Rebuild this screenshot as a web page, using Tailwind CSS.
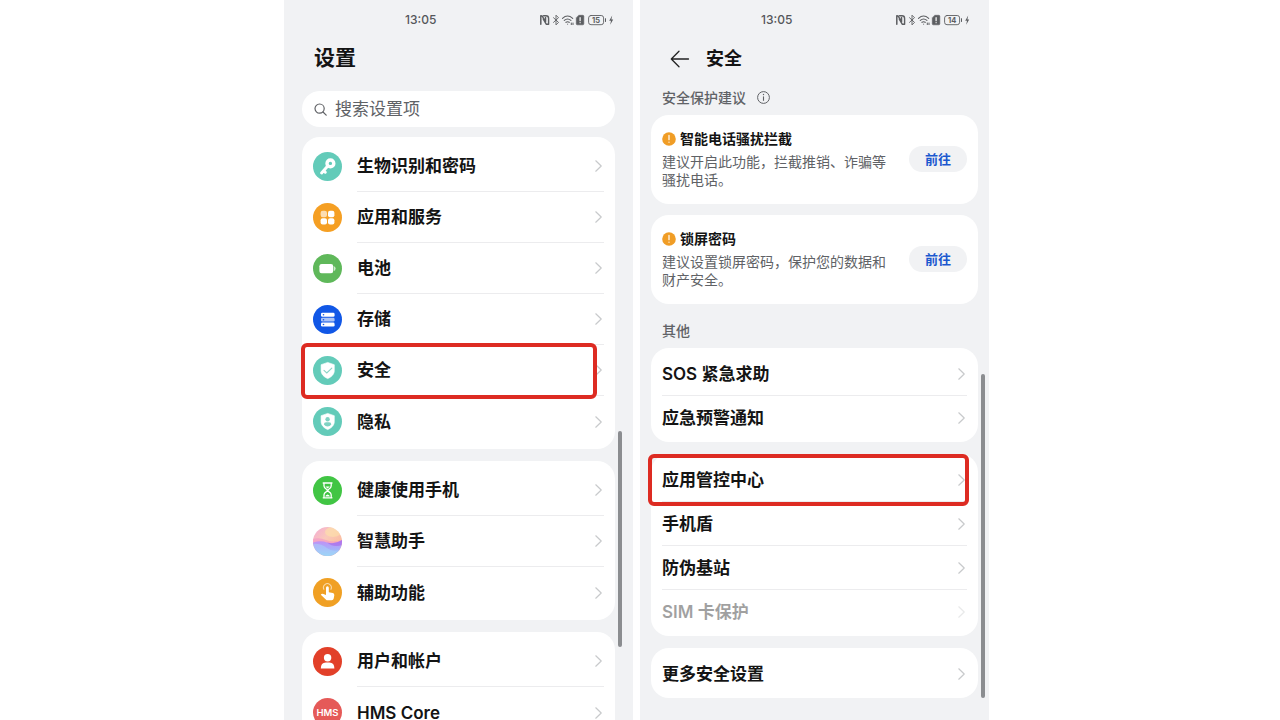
<!DOCTYPE html>
<html lang="zh-CN">
<head>
  <meta charset="UTF-8" />
  <meta name="viewport" content="width=device-width, initial-scale=1.0" />
  <title>设置</title>
  <script src="https://cdn.jsdelivr.net/npm/@tailwindcss/browser@4"></script>
</head>
<body class="bg-white font-['Inter','Noto_Sans_CJK_SC',sans-serif] text-[#141414]">

<main class="flex h-screen justify-center gap-[7px] overflow-hidden pr-[7px]">

  <!-- settings list -->
  <section class="relative w-[349px] overflow-hidden bg-[#f1f2f4]">
    <div class="status flex h-10 items-center justify-between pl-[121px] pr-[18px]" data-battery="15"></div>
    <h1 class="px-[30px] text-[21px] font-bold leading-[35px]">设置</h1>

    <form class="mx-[18px] mt-4 flex h-9 items-center gap-2 rounded-full bg-white pl-3" onsubmit="return false;">
      <label for="searchInput" aria-label="搜索设置项">
        <svg class="h-[13px] w-[13px] text-[#606266]" fill="none" stroke="currentColor" stroke-width="1.2" viewBox="0 0 13 13">
          <circle cx="5.6" cy="5.6" r="4.6" />
          <path stroke-linecap="round" d="M9 9l3.2 3.2" />
        </svg>
      </label>
      <input type="text" id="searchInput" placeholder="搜索设置项" class="min-w-0 flex-grow text-[17px] leading-6 placeholder:text-[#606266] focus:outline-none">
    </form>

    <div id="settingsList" class="mx-[18px] mt-[10px] flex flex-col gap-3"></div>

    <div class="absolute right-[11px] top-[431px] h-[216px] w-1 rounded-full bg-[#8b8d90]"></div>
  </section>

  <!-- security page -->
  <section class="relative w-[349px] overflow-hidden bg-[#f1f2f4]">
    <div class="status flex h-10 items-center justify-between pl-[121px] pr-[18px]" data-battery="14"></div>
    <header class="flex h-[37px] items-center gap-4 pl-[30px]">
      <button type="button" aria-label="返回">
        <svg class="h-5 w-5" fill="none" stroke="#222" stroke-width="1.3" stroke-linecap="round" stroke-linejoin="round" viewBox="0 0 20 20">
          <path d="M18.5 10H1.5M9 2.3L1.3 10L9 17.7" />
        </svg>
      </button>
      <h1 class="text-[18px] font-bold leading-6">安全</h1>
    </header>

    <div class="flex h-[38px] items-end gap-[11px] px-[22px] pb-[7px]">
      <h2 class="text-[14px] font-medium leading-5 text-[#606266]">安全保护建议</h2>
      <svg class="mb-1 h-[13px] w-[13px]" fill="none" stroke="#606266" viewBox="0 0 13 13">
        <circle cx="6.5" cy="6.5" r="5.9" stroke-width="1" />
        <path d="M6.5 5.4v4.4" stroke-width="1.1" />
        <circle cx="6.5" cy="3.5" r=".7" fill="#606266" stroke="none" />
      </svg>
    </div>

    <div id="adviceList" class="mx-[11px] flex flex-col gap-[11px]"></div>

    <div class="flex h-11 items-end px-[22px] pb-[7px]">
      <h2 class="text-[14px] font-medium leading-5 text-[#606266]">其他</h2>
    </div>

    <div id="securityList" class="mx-[11px] flex flex-col gap-3"></div>

    <div class="absolute right-1 top-[374px] h-[324px] w-1 rounded-full bg-[#8b8d90]"></div>
  </section>
</main>

<script>
  const icons = {
    key: `<circle cx="14.5" cy="14.5" r="14.5" fill="#63cbb9"/><circle cx="17.4" cy="11.4" r="3.4" fill="none" stroke="#fff" stroke-width="3.4"/><path d="M14.3 14.6L8.6 20.9M10.8 18.7l1.500 1.500" stroke="#fff" stroke-width="3" stroke-linecap="round"/>`,
    apps: `<circle cx="14.5" cy="14.5" r="14.5" fill="#f59f23"/><rect x="7.6" y="7.8" width="6.4" height="6.4" rx="2.2" fill="#fff" opacity=".65"/><g fill="#fff"><rect x="15" y="7.8" width="6.4" height="6.4" rx="2"/><rect x="7.6" y="15.2" width="6.4" height="6.4" rx="2"/><rect x="15" y="15.2" width="6.4" height="6.4" rx="2"/></g>`,
    battery: `<circle cx="14.5" cy="14.5" r="14.5" fill="#5fb85a"/><rect x="6.4" y="10" width="13.8" height="9.2" rx="2.2" fill="#fff"/><path d="M20.8 12.2q1.8.2 1.8 2.4t-1.8 2.4z" fill="#fff" opacity=".7"/>`,
    storage: `<circle cx="14.5" cy="14.5" r="14.5" fill="#1157e6"/><g fill="#fff"><rect x="8" y="7.8" width="13.6" height="3.9" rx="1.3"/><rect x="8" y="12.7" width="13.6" height="3.9" rx="1.3" opacity=".65"/><rect x="8" y="17.6" width="13.6" height="3.9" rx="1.3"/></g><g fill="#1157e6"><circle cx="10.5" cy="9.8" r=".8"/><circle cx="10.5" cy="14.7" r=".8"/><circle cx="10.5" cy="19.5" r=".8"/></g>`,
    shield: `<circle cx="14.5" cy="14.5" r="14.5" fill="#63cbb9"/><path d="M14.7 6.4l6.6 2.3v5.8c0 3.9-3.1 6.6-6.6 8.1-3.5-1.5-6.6-4.2-6.6-8.1V8.7z" fill="#fff" stroke="#fff" stroke-width=".6" stroke-linejoin="round"/><path d="M11 14.4l2.8 2.6 5-4.8" fill="none" stroke="#8bd5c7" stroke-width="1.1" stroke-linecap="round"/>`,
    privacy: `<circle cx="14.5" cy="14.5" r="14.5" fill="#63cbb9"/><path d="M14.7 6.4l6.6 2.3v5.8c0 3.9-3.1 6.6-6.6 8.1-3.5-1.5-6.6-4.2-6.6-8.1V8.7z" fill="#fff" stroke="#fff" stroke-width=".6" stroke-linejoin="round"/><g fill="#7fd2c3"><circle cx="14.6" cy="12.3" r="2.2"/><path d="M10.9 17.4q0-2.2 2.3-2.2h2.8q2.3 0 2.3 2.2-1.5 2-3.7 2t-3.7-2z"/></g>`,
    hourglass: `<circle cx="14.5" cy="14.5" r="14.5" fill="#41c544"/><g fill="none" stroke="#fff" stroke-width="1.3" stroke-linecap="round" stroke-linejoin="round"><path d="M10.2 7h8.8M10.2 21.8h8.8M11 7.3v2.7q0 1.8 2.4 3.2.9.6.9 1.2t-.9 1.2Q11 17 11 18.8v2.7M18.2 7.3v2.7q0 1.8-2.4 3.2-.9.6-.9 1.2t.9 1.2q2.4 1.4 2.4 3.2v2.7"/></g><path d="M12.4 10.4h4.4l-2.2 2.2zM12.3 20.6q.3-1.700 2.3-2.200 2 .5 2.300 2.200z" fill="#fff"/>`,
    assistant: `<defs><linearGradient id="sky" x1="0" y1="0" x2="1" y2="1"><stop offset="0" stop-color="#f3a9d6"/><stop offset=".4" stop-color="#fac9ba"/><stop offset="1" stop-color="#fbb38a"/></linearGradient><linearGradient id="wave" x1="0" y1="0" x2="0" y2="1"><stop offset="0" stop-color="#c58cf3"/><stop offset=".5" stop-color="#a9abfa"/><stop offset="1" stop-color="#8fd6f5"/></linearGradient><clipPath id="ball"><circle cx="14.5" cy="14.5" r="14.5"/></clipPath></defs><g clip-path="url(#ball)"><path fill="url(#sky)" d="M0 0h29v29H0z"/><ellipse cx="20" cy="5" rx="8" ry="5" fill="#fde3a8" opacity=".6"/><path d="M0 12q6-2 13 1t16 0v16H0z" fill="#f49bc6" opacity=".7"/><path d="M0 15.5q8-2.5 14 0t15-2.5v16H0z" fill="url(#wave)"/><path d="M14 15.5q8 2.5 15-2.5v5q-8 3-15-2.5z" fill="#a45be6" opacity=".5"/><path d="M0 17q7-1 14 4t15 1v7H0z" fill="#a9d4fa" opacity=".5"/></g>`,
    touch: `<circle cx="14.5" cy="14.5" r="14.5" fill="#f0a024"/><path d="M13 9.7q0-1.5 1.4-1.5t1.4 1.5v4.5l4 .9q1.7.5 1.5 2.2l-.6 3.3q-.3 1.7-2 1.7h-4q-1.1 0-1.900-.9l-5-4.7q.9-1.500 2.600-.7l2.600 1z" fill="#fff"/><path d="M11.1 11.6a3.900 3.900 0 1 1 6.600 0" fill="none" stroke="#fff" stroke-width="1.1" opacity=".6"/>`,
    user: `<circle cx="14.5" cy="14.5" r="14.5" fill="#e24029"/><circle cx="14.6" cy="10.7" r="3.7" fill="#fff"/><path d="M7.8 21.6q0-6 5-6h3.6q5 0 5 6z" fill="#fff"/>`,
    hms: `<circle cx="14.5" cy="14.5" r="14.5" fill="#e55a58"/><text x="14.5" y="18" text-anchor="middle" font-family="Inter, sans-serif" font-size="9.5" font-weight="600" fill="#fff">HMS</text>`,
  };

  const settings = [
    [
      { name: "生物识别和密码", icon: "key" },
      { name: "应用和服务", icon: "apps" },
      { name: "电池", icon: "battery" },
      { name: "存储", icon: "storage" },
      { name: "安全", icon: "shield", marked: true },
      { name: "隐私", icon: "privacy" },
    ],
    [
      { name: "健康使用手机", icon: "hourglass" },
      { name: "智慧助手", icon: "assistant" },
      { name: "辅助功能", icon: "touch" },
    ],
    [
      { name: "用户和帐户", icon: "user" },
      { name: "HMS Core", icon: "hms" },
    ],
  ];

  const advice = [
    { name: "智能电话骚扰拦截", text: "建议开启此功能，拦截推销、诈骗等骚扰电话。" },
    { name: "锁屏密码", text: "建议设置锁屏密码，保护您的数据和财产安全。" },
  ];

  const security = [
    [{ name: "SOS 紧急求助" }, { name: "应急预警通知" }],
    [{ name: "应用管控中心", marked: true }, { name: "手机盾" }, { name: "防伪基站" }, { name: "SIM 卡保护", disabled: true }],
    [{ name: "更多安全设置" }],
  ];

  const chevron = `<svg class="mr-[2px] h-3 w-[7px] shrink-0" fill="none" stroke="#c8cacc" stroke-width="1.2" stroke-linecap="round" stroke-linejoin="round" viewBox="0 0 7 12"><path d="M.8.8L6.2 6L.8 11.2"/></svg>`;

  // status bar: time on the left, NFC / bluetooth / wifi / sim / battery / charging on the right
  document.querySelectorAll(".status").forEach(bar => {
    bar.innerHTML = `
      <time class="text-[12px] font-medium leading-4 text-[#55575a]">13:05</time>
      <svg class="h-3 w-[76px]" viewBox="0 0 76 12" fill="none" stroke="#5c5e61" stroke-linecap="round" stroke-linejoin="round">
        <path d="M1.8 10.2V1.8l1.4.2 3.300 5.800V3.600" stroke-width="1.500"/>
        <path d="M4.600 1.800h2.400q2.600 0 2.600 2.600v5.800H7.200L4.200 5" stroke-width="1.400"/>
        <path d="M14.5 3.7l5 4.7-2.5 2.5V1.2l2.5 2.5-5 4.7" stroke-width=".9"/>
        <path d="M23.5 4.3q5-4.5 10.2 0M25.3 6.4q3.3-2.9 6.6 0M27 8.3q1.6-1.2 3.2 0" stroke-width="1.1"/>
        <path d="M28.6 10.2h.1M32.3 9v1.6M34 9v1.6" stroke-width="1"/>
        <path d="M40 1.3h3.8q1 0 1 1v7.500q0 1-1 1h-5.500q-1 0-1-1V4z" fill="#5c5e61" stroke-width=".6"/>
        <path d="M41.1 3.7v3M41.1 8.6v.1" stroke="#fff" stroke-width="1.2"/>
        <rect x="49.6" y="1.500" width="15" height="9.200" rx="2.400" stroke-width=".9"/>
        <path d="M66.5 4.7v2.8" stroke-width="1"/>
        <text x="57.1" y="8.9" text-anchor="middle" font-family="Inter, sans-serif" font-size="7.5" font-weight="700" fill="#5c5e61" stroke="none">${bar.dataset.battery}</text>
        <path d="M73.2 1.6l-3 5.2h1.8l-.8 3.9 3-5.2h-1.8z" fill="#5c5e61" stroke="none"/>
      </svg>
    `;
  });

  document.getElementById("settingsList").innerHTML = settings.map(group => `
    <ul class="rounded-[18px] bg-white pb-[2px] pt-1">
      ${group.map((item, i) => `
        <li class="relative">
          <a href="#" class="flex h-[51px] items-center gap-[15px] px-[11px]">
            <svg class="h-[29px] w-[29px] shrink-0" viewBox="0 0 29 29">${icons[item.icon]}</svg>
            <span class="flex h-full flex-grow items-center justify-between ${i < group.length - 1 ? "border-b border-[#ececee]" : ""}">
              <span class="text-[17px] font-semibold leading-6">${item.name}</span>
              ${chevron}
            </span>
          </a>
          ${item.marked ? `<div class="absolute -left-px -top-[2px] h-14 w-[296px] rounded-md border-4 border-[#dd2b22]"></div>` : ""}
        </li>
      `).join("")}
    </ul>
  `).join("");

  document.getElementById("adviceList").innerHTML = advice.map(item => `
    <article class="flex items-center justify-between rounded-[18px] bg-white px-[11px] pb-[15px] pt-[14px]">
      <div class="w-[236px]">
        <h3 class="flex items-center gap-1 text-[14px] font-bold leading-5">
          <svg class="h-[14px] w-[14px]" viewBox="0 0 14 14">
            <circle cx="7" cy="7" r="6.8" fill="#f09d26"/>
            <path d="M7 3.4v4.3M7 10v.2" stroke="#fff" stroke-width="1.2" stroke-linecap="round"/>
          </svg>
          ${item.name}
        </h3>
        <p class="mt-1 text-[14px] leading-[18px] text-[#606266]">${item.text}</p>
      </div>
      <button type="button" class="h-[26px] w-[58px] rounded-full bg-[#f1f2f4] text-[13px] font-bold leading-5 text-[#1b58cf]">前往</button>
    </article>
  `).join("");

  document.getElementById("securityList").innerHTML = security.map(group => `
    <ul class="rounded-[18px] bg-white pb-[2px] pt-1">
      ${group.map((item, i) => `
        <li class="relative px-[11px]">
          <a href="#" class="flex h-11 items-center justify-between ${i < group.length - 1 ? "border-b border-[#ececee]" : ""} ${item.disabled ? "opacity-40" : ""}">
            <span class="text-[17px] font-semibold leading-6">${item.name}</span>
            ${chevron}
          </a>
          ${item.marked ? `<div class="absolute -left-[3px] -top-1 h-[52px] w-[321px] rounded-md border-4 border-[#dd2b22]"></div>` : ""}
        </li>
      `).join("")}
    </ul>
  `).join("");
</script>
</body>
</html>
